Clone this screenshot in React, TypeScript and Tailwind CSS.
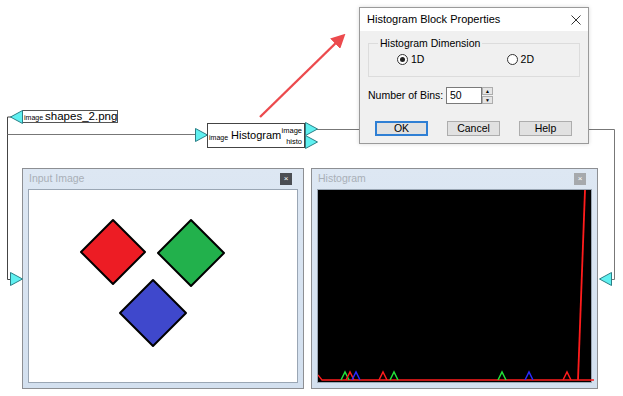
import React from 'react'

const font = { fontFamily: '"Liberation Sans", Arial, sans-serif' }

function Port({ dir, className }: { dir: 'left' | 'right'; className: string }) {
  return (
    <svg className={`absolute ${className}`} width="13" height="14" viewBox="0 0 13 14">
      <polygon
        points={dir === 'right' ? '0.5,0.5 12.5,7 0.5,13.5' : '12.5,0.5 0.5,7 12.5,13.5'}
        fill="#5ff0f0"
        stroke="#2b7f86"
        strokeWidth="1"
      />
    </svg>
  )
}

function ViewWindow({
  title,
  active,
  className,
  children,
}: {
  title: string
  active: boolean
  className: string
  children: React.ReactNode
}) {
  return (
    <div
      className={`absolute flex flex-col border border-[#8d8f93] bg-gradient-to-b from-[#dde7f3] to-[#d3e0ef] px-[5px] pb-[5px] ${className}`}
    >
      <div className="flex h-[22px] items-center justify-between pl-[1px] pr-[6px]">
        <span className="text-[10.5px] text-[#a9afb7]">{title}</span>
        <span
          className={`flex h-[12px] w-[12px] items-center justify-center text-[8px] leading-none text-white ${
            active ? 'bg-[#4b4e53]' : 'bg-[#a6a9ad]'
          }`}
        >
          ×
        </span>
      </div>
      <div className="relative flex-1 border border-[#9aa6b4]">{children}</div>
    </div>
  )
}

function Radio({ label, checked }: { label: string; checked?: boolean }) {
  return (
    <div className="flex items-center gap-[3px]">
      <span className="flex h-[11px] w-[11px] items-center justify-center rounded-full border border-[#333] bg-white">
        {checked && <span className="h-[5px] w-[5px] rounded-full bg-[#222]" />}
      </span>
      <span className="text-[10.5px]">{label}</span>
    </div>
  )
}

function DialogButton({ label, focused }: { label: string; focused?: boolean }) {
  return (
    <div
      className={`flex h-[15px] w-[53px] items-center justify-center bg-[#e1e1e1] text-[10.5px] ${
        focused ? 'border-2 border-[#2f7fd4]' : 'border border-[#adadad]'
      }`}
    >
      {label}
    </div>
  )
}

const peaks: { x: number; c: string }[] = [
  { x: 27, c: '#22e03a' },
  { x: 32, c: '#ff1c1c' },
  { x: 38, c: '#2a2aff' },
  { x: 65, c: '#ff1c1c' },
  { x: 76, c: '#22e03a' },
  { x: 184, c: '#22e03a' },
  { x: 211, c: '#2a2aff' },
  { x: 249, c: '#ff1c1c' },
]

export default function App() {
  return (
    <div className="relative h-[396px] w-[623px] overflow-hidden bg-white text-black" style={font}>
      {/* connector wires */}
      <svg className="absolute left-0 top-0" width="623" height="396">
        <polyline points="12,117 7.5,117 7.5,279.5 12,279.5" fill="none" stroke="#444" strokeWidth="1" />
        <line x1="7.5" y1="134.5" x2="196" y2="134.5" stroke="#777" strokeWidth="1" />
        <polyline points="316,129.5 614.5,129.5 614.5,279.5 611,279.5" fill="none" stroke="#777" strokeWidth="1" />
      </svg>

      {/* image source block */}
      <div className="absolute left-[22px] top-[110px] flex h-[13px] w-[96px] items-center gap-[2px] whitespace-nowrap border border-[#555] bg-white px-[1px] leading-none">
        <span className="mt-[2px] text-[7px]">image</span>
        <span className="text-[11.5px]">shapes_2.png</span>
      </div>
      <Port dir="left" className="left-[10px] top-[110px]" />

      {/* histogram block */}
      <Port dir="right" className="left-[195px] top-[128px]" />
      <Port dir="right" className="left-[305px] top-[122px]" />
      <Port dir="right" className="left-[305px] top-[135px]" />
      <div className="absolute left-[207px] top-[123px] flex h-[25px] w-[98px] items-center whitespace-nowrap border border-[#444] bg-white pl-[1px] pr-[2px] leading-none">
        <span className="mt-[3px] text-[7px]">image</span>
        <span className="ml-[3px] text-[11px]">Histogram</span>
        <span className="ml-auto flex flex-col items-end text-[7.5px] leading-[11px]">
          <span>image</span>
          <span>histo</span>
        </span>
      </div>

      {/* input image window */}
      <ViewWindow title="Input Image" active className="left-[22px] top-[168px] h-[221px] w-[282px]">
        <div className="h-full w-full bg-white">
          <svg width="270" height="192" viewBox="0 0 270 192">
            <g stroke="#000" strokeWidth="2" strokeLinejoin="round">
              <polygon points="84,30 116,62 84,94 52,62" fill="#ed1c24" />
              <polygon points="162,30 195,63 162,96 129,63" fill="#22b14c" />
              <polygon points="124,90 157,123 124,156 91,123" fill="#3f48cc" />
            </g>
          </svg>
        </div>
      </ViewWindow>
      <Port dir="right" className="left-[10px] top-[272px]" />

      {/* histogram window */}
      <ViewWindow title="Histogram" active={false} className="left-[311px] top-[168px] h-[221px] w-[287px]">
        <div className="h-full w-full bg-black">
          <svg width="276" height="192" viewBox="0 0 276 192">
            <polyline points="0,185 4,190 276,190" fill="none" stroke="#ff1c1c" strokeWidth="1.3" />
            {peaks.map((p, i) => (
              <polyline
                key={i}
                points={`${p.x - 4},190 ${p.x},182 ${p.x + 4},190`}
                fill="none"
                stroke={p.c}
                strokeWidth="1.5"
              />
            ))}
            <line x1="267" y1="0" x2="260" y2="190" stroke="#ff1c1c" strokeWidth="1.8" />
          </svg>
        </div>
      </ViewWindow>
      <Port dir="left" className="left-[599px] top-[272px]" />

      {/* annotation arrow */}
      <svg className="absolute left-0 top-0" width="623" height="396">
        <defs>
          <marker id="head" markerWidth="6" markerHeight="6" refX="4" refY="3" orient="auto">
            <polygon points="0,0 6,3 0,6" fill="#ec4a4d" />
          </marker>
        </defs>
        <line x1="260" y1="117" x2="342" y2="37" stroke="#ec4a4d" strokeWidth="2.4" markerEnd="url(#head)" />
      </svg>

      {/* properties dialog */}
      <div className="absolute left-[359px] top-[7px] flex h-[137px] w-[230px] flex-col border border-[#9a9a9a] bg-[#f0f0f0] shadow-[0_0_4px_rgba(0,0,0,0.15)]">
        <div className="flex h-[23px] items-center justify-between bg-white pl-[7px] pr-[7px]">
          <span className="text-[11px]">Histogram Block Properties</span>
          <svg width="10" height="10" viewBox="0 0 10 10">
            <path d="M0.5 0.5 L9.5 9.5 M9.5 0.5 L0.5 9.5" stroke="#333" strokeWidth="1" />
          </svg>
        </div>
        <div className="flex flex-1 flex-col px-[8px]">
          <fieldset className="mt-[6px] h-[40px] border border-[#dcdcdc] px-[8px]">
            <legend className="ml-[1px] px-[2px] text-[10.5px] leading-[12px]">Histogram Dimension</legend>
            <div className="mt-[3px] flex items-center justify-between pl-[20px] pr-[37px]">
              <Radio label="1D" checked />
              <Radio label="2D" />
            </div>
          </fieldset>
          <div className="mt-[10px] flex items-center">
            <span className="w-[78px] text-[10.5px]">Number of Bins:</span>
            <div className="flex h-[17px] w-[36px] items-center border border-[#7a7a7a] bg-white pl-[3px] text-[10.5px]">
              50
            </div>
            <div className="flex h-[17px] w-[11px] flex-col gap-[1px]">
              <div className="flex flex-1 items-center justify-center border border-[#adadad] bg-[#e5e5e5] text-[5px] leading-none">
                ▲
              </div>
              <div className="flex flex-1 items-center justify-center border border-[#adadad] bg-[#e5e5e5] text-[5px] leading-none">
                ▼
              </div>
            </div>
          </div>
          <div className="mt-[17px] flex items-center justify-between pl-[7px] pr-[8px]">
            <DialogButton label="OK" focused />
            <DialogButton label="Cancel" />
            <DialogButton label="Help" />
          </div>
        </div>
      </div>
    </div>
  )
}
